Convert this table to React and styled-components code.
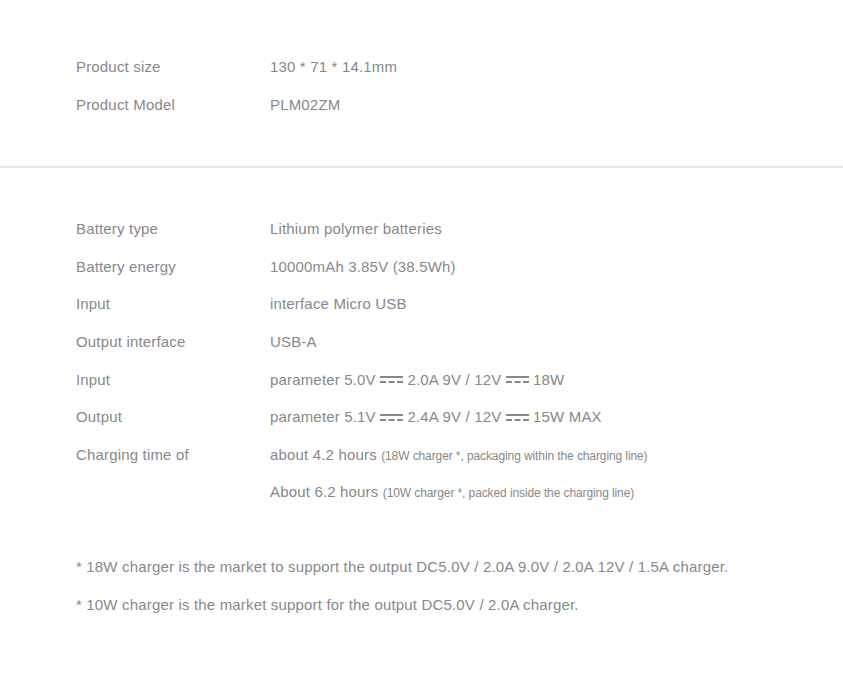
import React from 'react'
import styled, { createGlobalStyle } from 'styled-components'

const first = [
  { label: 'Product size', value: '130 * 71 * 14.1mm' },
  { label: 'Product Model', value: 'PLM02ZM' },
]

function DcMark() {
  return (
    <Dc width="23" height="9" viewBox="0 0 23 9">
      <rect x="0" y="1" width="23" height="2" />
      <rect x="0" y="6" width="6" height="2" />
      <rect x="8.5" y="6" width="6" height="2" />
      <rect x="17" y="6" width="6" height="2" />
    </Dc>
  )
}

function App() {
  return (
    <Page>
      <GlobalStyle />
      <Section $top={48} $bottom={43}>
        {first.map(r => (
          <Row key={r.label}>
            <Label>{r.label}</Label>
            <Value>{r.value}</Value>
          </Row>
        ))}
      </Section>
      <Divider />
      <Section $top={42} $bottom={0}>
        <Row>
          <Label>Battery type</Label>
          <Value>Lithium polymer batteries</Value>
        </Row>
        <Row>
          <Label>Battery energy</Label>
          <Value>10000mAh 3.85V (38.5Wh)</Value>
        </Row>
        <Row>
          <Label>Input</Label>
          <Value>interface Micro USB</Value>
        </Row>
        <Row>
          <Label>Output interface</Label>
          <Value>USB-A</Value>
        </Row>
        <Row>
          <Label>Input</Label>
          <Value>parameter 5.0V <DcMark /> 2.0A 9V / 12V <DcMark /> 18W</Value>
        </Row>
        <Row>
          <Label>Output</Label>
          <Value>parameter 5.1V <DcMark /> 2.4A 9V / 12V <DcMark /> 15W MAX</Value>
        </Row>
        <Row>
          <Label>Charging time of</Label>
          <Value>about 4.2 hours <Small>(18W charger *, packaging within the charging line)</Small></Value>
        </Row>
        <Row>
          <Label />
          <Value>About 6.2 hours <Small>(10W charger *, packed inside the charging line)</Small></Value>
        </Row>
        <Notes>
          <Note>* 18W charger is the market to support the output DC5.0V / 2.0A 9.0V / 2.0A 12V / 1.5A charger.</Note>
          <Note>* 10W charger is the market support for the output DC5.0V / 2.0A charger.</Note>
        </Notes>
      </Section>
    </Page>
  )
}

export default App

const GlobalStyle = createGlobalStyle`
  body {
    margin: 0;
    background: #fff;
    font-family: "Liberation Sans", Arial, sans-serif;
  }
`

const Page = styled.div`
  width: 843px;
  min-height: 697px;
  background: #fff;
  color: #888;
  font-size: 15px;
  letter-spacing: 0.17px;
`

const Section = styled.div`
  padding: ${p => p.$top}px 0 ${p => p.$bottom}px 76px;
`

const Row = styled.div`
  display: grid;
  grid-template-columns: 194px 1fr;
  height: 37.6px;
  line-height: 37.6px;
`

const Label = styled.div`
  white-space: nowrap;
`

const Value = styled.div`
  white-space: nowrap;
`

const Small = styled.span`
  font-size: 12px;
  letter-spacing: -0.1px;
`

const Dc = styled.svg`
  display: inline-block;
  vertical-align: middle;
  margin-top: -2px;
  fill: #888;
`

const Divider = styled.div`
  height: 2px;
  background: #e6e6e6;
`

const Notes = styled.div`
  margin-top: 37px;
`

const Note = styled.div`
  height: 38px;
  line-height: 38px;
  white-space: nowrap;
`
